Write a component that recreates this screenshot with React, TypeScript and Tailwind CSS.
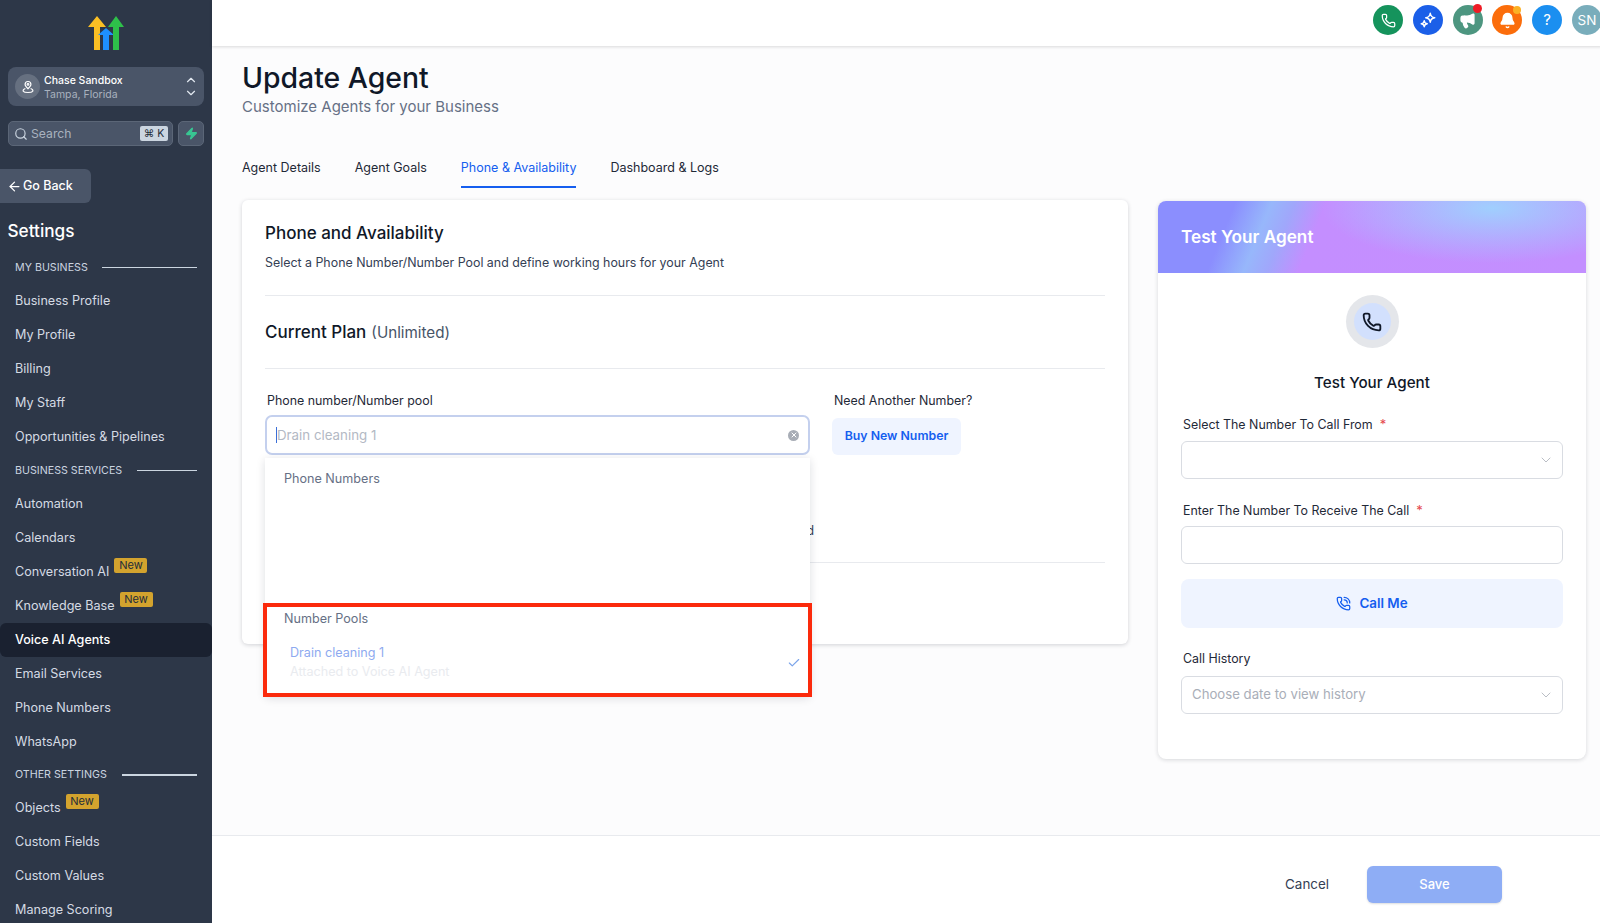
import React from "react";
import { ArrowLeft, Bell, Check, ChevronDown, ChevronUp, Megaphone, Phone, PhoneCall, Search, Zap, X } from "lucide-react";

const Section = ({ label, w, h }: { label: string; w: string; h: string }) => (
  <div className={`flex items-center pl-[15px] pr-[15px] ${h}`}>
    <span className="mt-[1px] text-[10.7px] text-[#cbd5e0] whitespace-nowrap">{label}</span>
    <span className={`ml-auto h-[1.5px] bg-[#cbd5e0] ${w}`} />
  </div>
);

const Item = ({ label, isNew, active }: { label: string; isNew?: boolean; active?: boolean }) => (
  <div className={`flex items-center h-[34px] pl-[15px] text-[12.6px] rounded-[6px] ${active ? "bg-[#1a2130] text-white font-medium" : "text-[#d5dbe4]"}`}>
    <span>{label}</span>
    {isNew && (
      <span className="ml-[5px] -mt-[14px] h-[15px] w-[33px] flex items-center justify-center rounded-[2px] bg-[#d3a32e] text-[#232c3a] text-[11px]">New</span>
    )}
  </div>
);

const Logo = () => (
  <svg width="38" height="36" viewBox="0 0 38 36">
    <path d="M1 11 L10 0 L19 11 L13 11 L13 34 L7 34 L7 11 Z" fill="#fbbf24" />
    <path d="M11 19 L19 12 L27 19 L22 19 L22 34 L16 34 L16 19 Z" fill="#1e90ff" />
    <path d="M21 11 L29 0 L37 11 L32 11 L32 34 L26 34 L26 11 Z" fill="#2ec04a" />
  </svg>
);

const TopIcon = ({ bg, children }: { bg: string; children: React.ReactNode }) => (
  <div className={`relative w-[30px] h-[30px] rounded-full flex items-center justify-center text-white shrink-0 ${bg}`}>{children}</div>
);

const Field = ({ label, req, children }: { label: string; req?: boolean; children: React.ReactNode }) => (
  <div>
    <div className="pl-[2px] text-[12.4px] text-[#1f2937] h-[18px] leading-[18px]">
      {label}
      {req && <span className="ml-[7px] text-[#e5484d] text-[13px]">*</span>}
    </div>
    {children}
  </div>
);

export default function App() {
  return (
    <div className="flex w-[1600px] h-[923px] overflow-hidden bg-[#fcfcfd] font-['Inter',sans-serif]">
      <aside className="w-[212px] shrink-0 bg-[#2d3748] overflow-hidden">
        <div className="flex justify-center pt-[16px] h-[67px]"><Logo /></div>
        <div className="mx-[8px] h-[39px] rounded-[8px] bg-[#4a5568] flex items-center pl-[7px] pr-[6px]">
          <div className="w-[25px] h-[25px] rounded-full bg-[#667080] flex items-center justify-center">
            <svg width="14" height="14" viewBox="0 0 24 24" fill="none" stroke="white" strokeWidth="2">
              <path d="M12 15 C9 12 7 10 7 7.5 C7 4.5 9.5 2.5 12 2.5 C14.5 2.5 17 4.5 17 7.5 C17 10 15 12 12 15 Z" />
              <circle cx="12" cy="7.5" r="1.5" />
              <path d="M7.5 14.5 C4 16 3 18 4 19.5 C6 22 18 22 20 19.5 C21 18 20 16 16.5 14.5" />
            </svg>
          </div>
          <div className="ml-[4px] mt-[3px] flex-1 leading-[14px]">
            <div className="text-[10.5px] font-medium text-white">Chase Sandbox</div>
            <div className="text-[10.5px] text-[#a9b2bf]">Tampa, Florida</div>
          </div>
          <div className="flex flex-col text-[#e2e8f0]">
            <ChevronUp size={14} className="-mb-[1px]" strokeWidth={2} />
            <ChevronDown size={14} strokeWidth={2} />
          </div>
        </div>
        <div className="mx-[8px] mt-[15px] flex gap-[5px] h-[25px]">
          <div className="flex-1 rounded-[5px] bg-[#4a5568] border border-[#5b6677] flex items-center pl-[5px] pr-[4px]">
            <Search size={14} className="text-[#cbd5e0]" />
            <span className="ml-[3px] mt-[1px] text-[12.2px] text-[#a9b2bf]">Search</span>
            <span className="ml-auto h-[15px] w-[28px] rounded-[2px] bg-[#cbd5e0] text-[#232c3a] text-[10.5px] flex items-center justify-center">⌘ K</span>
          </div>
          <div className="w-[26px] rounded-[5px] bg-[#4a5568] border border-[#5b6677] flex items-center justify-center">
            <Zap size={13} className="text-[#38c793] fill-[#38c793]" />
          </div>
        </div>
        <div className="mt-[23px] w-[91px] h-[34px] rounded-r-[6px] bg-[#4a5568] flex items-center pl-[7px] text-white text-[12.5px] font-medium">
          <ArrowLeft size={15} className="mr-[1px]" />Go Back
        </div>
        <div className="mt-[15px] pl-[7.5px] h-[26px] leading-[26px] text-[17.2px] font-medium text-white">Settings</div>
        <div className="mt-[7px]">
          <Section label="MY BUSINESS" w="w-[95px]" h="h-[33px]" />
          <Item label="Business Profile" />
          <Item label="My Profile" />
          <Item label="Billing" />
          <Item label="My Staff" />
          <Item label="Opportunities & Pipelines" />
          <Section label="BUSINESS SERVICES" w="w-[60px]" h="h-[33px]" />
          <Item label="Automation" />
          <Item label="Calendars" />
          <Item label="Conversation AI" isNew />
          <Item label="Knowledge Base" isNew />
          <Item label="Voice AI Agents" active />
          <Item label="Email Services" />
          <Item label="Phone Numbers" />
          <Item label="WhatsApp" />
          <Section label="OTHER SETTINGS" w="w-[75px]" h="h-[32px]" />
          <Item label="Objects" isNew />
          <Item label="Custom Fields" />
          <Item label="Custom Values" />
          <Item label="Manage Scoring" />
        </div>
      </aside>

      <main className="flex-1 min-w-0 flex flex-col">
        <header className="h-[46px] shrink-0 bg-white shadow-[0_1px_3px_rgba(0,0,0,0.14)] flex items-start justify-end gap-[9.8px] pt-[5px] -mr-[2px]">
          <TopIcon bg="bg-[#15935c]"><Phone size={15} /></TopIcon>
          <TopIcon bg="bg-[#1b5fe8]">
            <svg width="18" height="18" viewBox="0 0 24 24" fill="none" stroke="white" strokeWidth="2" strokeLinejoin="round">
              <path d="M15 3 C15.5 7 17 8.5 21 9 C17 9.5 15.5 11 15 15 C14.5 11 13 9.5 9 9 C13 8.5 14.5 7 15 3 Z" />
              <path d="M7 13 C7.3 15.5 8.5 16.7 11 17 C8.5 17.3 7.3 18.5 7 21 C6.7 18.5 5.5 17.3 3 17 C5.5 16.7 6.7 15.5 7 13 Z" />
            </svg>
          </TopIcon>
          <TopIcon bg="bg-[#4d9680]">
            <Megaphone size={17} className="fill-white" />
            <span className="absolute -top-[1px] right-[1px] w-[9px] h-[9px] rounded-full bg-[#ee1c25]" />
          </TopIcon>
          <TopIcon bg="bg-[#fb6d0b]">
            <Bell size={17} className="fill-white" />
            <span className="absolute top-[1px] right-[1px] w-[8px] h-[8px] rounded-full bg-[#fbb024]" />
          </TopIcon>
          <TopIcon bg="bg-[#1b8ff0]"><span className="text-[15px]">?</span></TopIcon>
          <TopIcon bg="bg-[#79adbb]"><span className="text-[13.5px]">SN</span></TopIcon>
        </header>

        <div className="flex-1 min-h-0 pl-[30px]">
          <h1 className="mt-[15px] h-[34px] leading-[34px] text-[28.4px] font-medium text-[#101828]">Update Agent</h1>
          <p className="h-[24px] leading-[24px] text-[15px] text-[#667085]">Customize Agents for your Business</p>
          <nav className="mt-[34px] flex gap-[34px] h-[35px] text-[12.5px] text-[#1f2937]">
            <span className="pt-[6px]">Agent Details</span>
            <span className="pt-[6px]">Agent Goals</span>
            <span className="pt-[6px] border-b-2 border-[#155eef] text-[#155eef]">Phone &amp; Availability</span>
            <span className="pt-[6px]">Dashboard &amp; Logs</span>
          </nav>

          <div className="mt-[12px] flex gap-[30px] items-start">
            <section className="relative w-[886px] h-[444px] bg-white rounded-[6px] shadow-[0_1px_4px_rgba(16,24,40,0.18)] px-[23px]">
              <h2 className="pt-[21px] h-[47px] text-[17px] leading-[24px] font-medium text-[#101828]">Phone and Availability</h2>
              <p className="mt-[6px] h-[20px] leading-[20px] text-[12.4px] text-[#344054]">Select a Phone Number/Number Pool and define working hours for your Agent</p>
              <div className="mt-[22px] h-px bg-[#e8eaee]" />
              <div className="h-[72px] pt-[2px] flex items-center text-[17px] font-medium text-[#101828]">
                Current Plan<span className="ml-[5px] text-[15.2px] font-normal text-[#475467]">(Unlimited)</span>
              </div>
              <div className="h-px bg-[#e8eaee]" />
              <div className="mt-[23px] flex">
                <div className="w-[545px]">
                  <div className="pl-[2px] h-[18px] leading-[18px] text-[12.4px] text-[#1f2937]">Phone number/Number pool</div>
                  <div className="mt-[5px] h-[40px] rounded-[7px] border-2 border-[#c4d0ee] bg-white flex items-center pl-[9px] pr-[9px]">
                    <span className="w-px h-[16px] bg-[#3b6fd8]" />
                    <span className="mt-[2px] text-[13.3px] text-[#b3b9c4]">Drain cleaning 1</span>
                    <span className="ml-auto w-[11px] h-[11px] rounded-full bg-[#a8adb6] flex items-center justify-center">
                      <X size={8} className="text-white" strokeWidth={3} />
                    </span>
                  </div>
                </div>
                <div className="ml-[22px]">
                  <div className="pl-[2px] h-[18px] leading-[18px] text-[12.4px] text-[#1f2937]">Need Another Number?</div>
                  <div className="mt-[8px] w-[129px] h-[37px] rounded-[6px] bg-[#eff4ff] flex items-center justify-center text-[12.3px] font-semibold text-[#155eef]">Buy New Number</div>
                </div>
              </div>
              <div className="mt-[107px] h-px bg-[#e8eaee]" />
              <span className="absolute right-[314px] top-[322px] text-[12.4px] text-[#344054]">Attached</span>

              <div className="absolute left-[23px] top-[258px] w-[545px] h-[238px] bg-white rounded-b-[4px] shadow-[0_2px_10px_rgba(16,24,40,0.14)]">
                <div className="pl-[19px] pt-[12px] text-[12.6px] leading-[18px] text-[#667085]">Phone Numbers</div>
                <div className="absolute left-[-2px] right-[-2px] top-[145px] bottom-[-1px] border-[4px] border-[#fb2a0c] pl-[17px]">
                  <div className="pt-[3px] text-[12.6px] leading-[18px] text-[#667085]">Number Pools</div>
                  <div className="flex items-center pl-[6px] pr-[7px] mt-[16px]">
                    <div>
                      <div className="text-[12.6px] leading-[18px] text-[#8eaaf0]">Drain cleaning 1</div>
                      <div className="mt-[1px] text-[12.6px] leading-[18px] text-[#e9ebef]">Attached to Voice AI Agent</div>
                    </div>
                    <Check size={14} className="ml-auto text-[#7ba4ea]" />
                  </div>
                </div>
              </div>
            </section>

            <section className="mt-[1px] w-[428px] h-[558px] bg-white rounded-[8px] shadow-[0_1px_4px_rgba(16,24,40,0.16)] overflow-hidden">
              <div className="h-[72px] flex items-center pl-[23px] text-[17.2px] font-semibold text-white bg-[radial-gradient(ellipse_170px_55px_at_78%_10%,#a0cffe_0%,rgba(160,207,254,0)_100%),linear-gradient(112deg,#8b8efe_0%,#8b8efe_17%,#97b7fb_25%,#a0a7fb_30%,#c48eff_37%,#c38fff_100%)]">Test Your Agent</div>
              <div className="px-[23px]">
                <div className="mt-[22px] mx-auto w-[53px] h-[53px] rounded-full bg-[#e4e6ea] flex items-center justify-center">
                  <div className="w-[37px] h-[37px] rounded-full bg-[#d2e0fd] flex items-center justify-center">
                    <Phone size={20} strokeWidth={2.2} className="text-[#101828]" />
                  </div>
                </div>
                <div className="mt-[24px] text-center text-[15.2px] leading-[22px] font-medium text-[#101828]">Test Your Agent</div>
                <div className="mt-[21px]">
                  <Field label="Select The Number To Call From" req>
                    <div className="mt-[8px] h-[38px] rounded-[6px] border border-[#d9dce2] flex items-center justify-end pr-[8px]">
                      <ChevronDown size={16} strokeWidth={1.2} className="text-[#a8adb6]" />
                    </div>
                  </Field>
                </div>
                <div className="mt-[22px]">
                  <Field label="Enter The Number To Receive The Call" req>
                    <div className="mt-[7px] h-[38px] rounded-[6px] border border-[#d9dce2]" />
                  </Field>
                </div>
                <div className="mt-[15px] h-[49px] rounded-[8px] bg-[#eff4ff] flex items-center justify-center gap-[8px] text-[13.4px] font-semibold text-[#155eef]">
                  <PhoneCall size={15} />Call Me
                </div>
                <div className="mt-[22px]">
                  <Field label="Call History">
                    <div className="mt-[8px] h-[38px] rounded-[6px] border border-[#d9dce2] flex items-center pl-[10px] pr-[8px]">
                      <span className="text-[13.2px] text-[#a9aeb8]">Choose date to view history</span>
                      <ChevronDown size={16} strokeWidth={1.2} className="ml-auto text-[#a8adb6]" />
                    </div>
                  </Field>
                </div>
              </div>
            </section>
          </div>
        </div>

        <footer className="h-[88px] shrink-0 border-t border-[#e8eaee] bg-white flex items-start justify-end pr-[98px] pt-[30px]">
          <span className="mr-[38px] h-[37px] leading-[37px] text-[13.4px] text-[#344054]">Cancel</span>
          <span className="w-[135px] h-[37px] rounded-[6px] bg-[#8eadf5] flex items-center justify-center text-[13px] font-medium text-white shadow-[0_1px_2px_rgba(16,24,40,0.15)]">Save</span>
        </footer>
      </main>
    </div>
  );
}
